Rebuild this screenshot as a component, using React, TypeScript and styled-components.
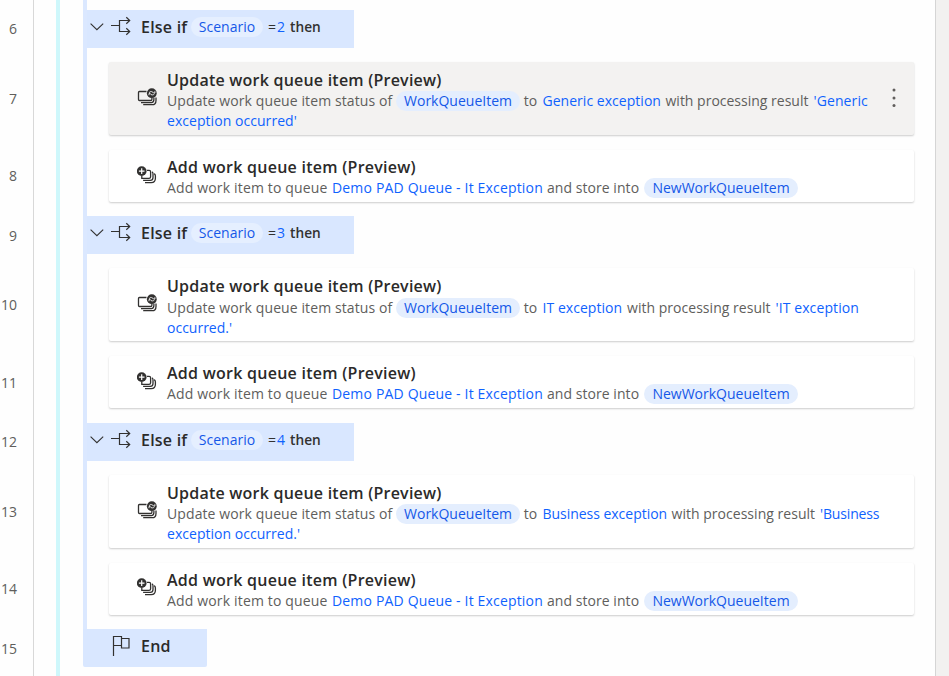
import React from 'react';
import styled, { createGlobalStyle } from 'styled-components';

const GlobalStyle = createGlobalStyle`
  * { box-sizing: border-box; }
  body { margin: 0; overflow: hidden; background: #fff; }
`;

const Designer = styled.div`
  display: flex;
  width: 949px;
  height: 676px;
  overflow: hidden;
  background: #fefefe;
  font: 14px/20px "Open Sans", "Segoe UI", sans-serif;
  color: #605e5c;
`;

const Gutter = styled.div`
  width: 34px;
  padding-top: 10.4px;
  border-right: 1px solid #d8d8d8;
`;

const LineNumber = styled.div<{ $height: number; $gap: number }>`
  display: flex;
  align-items: center;
  justify-content: flex-end;
  height: ${p => p.$height}px;
  margin-bottom: ${p => p.$gap}px;
  padding-right: 16px;
`;

const OuterRail = styled.div`
  width: 4px;
  margin-left: 22px;
  background: #cef7fb;
`;

const Steps = styled.div`
  width: 832px;
  margin-left: 23px;
`;

const Block = styled.div<{ $lead?: boolean }>`
  height: ${p => (p.$lead ? 10 : 206.25)}px;
  border-left: 4px solid #dbe8ff;
`;

const BranchHeader = styled.div`
  display: flex;
  align-items: center;
  width: 267px;
  height: 38px;
  padding: 0 0 4px 2px;
  background: #d9e7ff;
`;

const EndHeader = styled.div`
  display: flex;
  align-items: center;
  width: 124px;
  height: 38px;
  padding: 0 0 3px 28px;
  border-radius: 0 0 2px 2px;
  background: #d9e7ff;
`;

const Keyword = styled.span<{ $width?: number; $spacing?: number }>`
  flex: none;
  width: ${p => (p.$width ? `${p.$width}px` : 'auto')};
  font-size: 16px;
  font-weight: 600;
  letter-spacing: ${p => p.$spacing ?? 0.22}px;
  white-space: pre;
  color: #2b2a29;
`;

const Chip = styled.span<{ $width: number; $soft?: boolean }>`
  flex: none;
  width: ${p => p.$width}px;
  height: 20px;
  border-radius: 10px;
  line-height: 20px;
  text-align: center;
  white-space: pre;
  color: #1558e8;
  background: ${p => (p.$soft ? '#e5efff' : '#e4eefe')};
`;

const Condition = styled.span`
  display: flex;
  margin-left: 5px;
  color: #323130;
`;

const Then = styled.span`
  margin-left: 5px;
  font-weight: 600;
  font-size: 13.7px;
`;

const Value = styled.span`
  margin-left: 1px;
  color: #0f62fe;
`;

const Card = styled.div<{ $tall?: boolean; $selected?: boolean }>`
  display: flex;
  width: 805px;
  height: ${p => (p.$tall ? 73 : 52)}px;
  margin: ${p => (p.$tall ? 14 : 15)}px 0 0 22px;
  padding-top: ${p => (p.$tall ? 8 : 7)}px;
  border-radius: 2px;
  background: ${p => (p.$selected ? '#f3f2f1' : '#fff')};
  box-shadow: 0 1px 2px rgba(0, 0, 0, 0.2);
`;

const IconSlot = styled.div<{ $top: number }>`
  width: 58px;
  padding: ${p => p.$top}px 0 0 28px;
`;

const Body = styled.div`
  width: 717px;
`;

const Title = styled.div<{ $tall?: boolean }>`
  height: ${p => (p.$tall ? 21.4 : 21)}px;
  line-height: 20px;
`;

const Line = styled.div`
  display: flex;
  height: 20px;
  line-height: 20px;
`;

const Run = styled.span<{ $width: number; $spacing?: number; $link?: boolean }>`
  flex: none;
  width: ${p => p.$width}px;
  letter-spacing: ${p => p.$spacing ?? 0}px;
  white-space: pre;
  color: ${p => (p.$link ? '#0f62fe' : '#605e5c')};
`;

const MoreButton = styled.button`
  display: flex;
  width: 20px;
  height: 20px;
  margin-top: 18px;
  padding: 0;
  border: 0;
  background: none;
`;

const ScrollGutter = styled.div`
  width: 14px;
  margin-left: 20px;
  border-left: 1px solid #d5d5d5;
  background: #f2f1f0;
`;

const Drawing = styled.svg<{ $right?: number }>`
  display: block;
  flex: none;
  margin-right: ${p => p.$right ?? 0}px;
`;

const Chevron = () => (
  <Drawing width="16" height="16" $right={6} viewBox="0 0 16 16" fill="none" stroke="#323130" strokeWidth="1.1">
    <path d="M1.6 4.7 L7.9 10.7 L14.2 4.7" />
  </Drawing>
);

const Branch = () => (
  <Drawing width="22" height="22" $right={8} viewBox="0 0 22 22" fill="none" stroke="#323130" strokeWidth="1.2">
    <path d="M0 9.5H8.5M18.5 4.5H8.5V15.5H18.5M15.3 1.3L18.7 4.5L15.3 7.7M15.3 12.3L18.7 15.5L15.3 18.7" />
  </Drawing>
);

const Flag = () => (
  <Drawing width="20" height="22" $right={10} viewBox="0 0 20 22" fill="none" stroke="#323130" strokeWidth="1.2">
    <path d="M2.5 21V1.5H10.5V10.5H2.5M10.5 3.5H18V13H10.5V10.5" />
  </Drawing>
);

const UpdateIcon = () => (
  <Drawing width="21" height="20" viewBox="0 0 21 20" fill="none" stroke="#323130" strokeWidth="1.3">
    <path d="M9.5 3.5H2.4Q1.5 3.5 1.5 4.5V11.5Q1.5 12.5 2.5 12.5H13.5Q14.9 12.5 14.9 11.2V9.8" />
    <path d="M4 14.6H14.3Q16.9 14.6 16.9 11.6V9.8M6.2 16.7H15Q19 16.7 19 12.4V9.5" />
    <circle cx="14.8" cy="5.2" r="4.9" fill="#323130" stroke="none" />
    <path d="M11.9 4.9Q13 3.1 14.7 3.6Q16 4 16.5 5H17.9V3.2M12 7.2V5.6H13.3Q13.8 7 15.4 6.9Q16.8 6.8 17.5 5.8" stroke="#fff" strokeWidth="0.85" />
  </Drawing>
);

const AddIcon = () => (
  <Drawing width="21" height="20" viewBox="0 0 21 20" fill="none" stroke="#323130" strokeWidth="1.3">
    <path d="M10 4.4H12.2Q13.6 4.4 13.6 5.8V10.7Q13.6 12.3 12 12.3H4.8V10" />
    <path d="M14.9 5.8Q16 6.2 16 7.8V11.5Q16 14.4 13.2 14.4H6.1M17.2 7.6Q18.4 8.3 18.4 10V12.2Q18.4 16.6 14.2 16.6H8" />
    <circle cx="4.7" cy="5.1" r="4.9" fill="#323130" stroke="none" />
    <path d="M4.7 2.3V7.9M1.9 5.1H7.5" stroke="#fff" strokeWidth="1.2" />
  </Drawing>
);

type Part = { text: string; width: number; spacing?: number };
type Branching = {
  value: string;
  status: Part;
  resultWidth: number;
  resultSpacing?: number;
  result: Part;
  rest: Part;
  selected?: boolean;
};

const branches: Branching[] = [
  {
    value: '2',
    status: { text: 'Generic exception', width: 123, spacing: 0.03 },
    resultWidth: 148,
    result: { text: "'Generic", width: 56, spacing: 0.1 },
    rest: { text: "exception occurred'", width: 140, spacing: 0.05 },
    selected: true,
  },
  {
    value: '3',
    status: { text: 'IT exception', width: 84.5, spacing: 0.05 },
    resultWidth: 148.5,
    resultSpacing: 0.03,
    result: { text: "'IT exception", width: 85, spacing: 0.1 },
    rest: { text: "occurred.'", width: 140 },
  },
  {
    value: '4',
    status: { text: 'Business exception', width: 129, spacing: -0.03 },
    resultWidth: 148.5,
    resultSpacing: 0.03,
    result: { text: "'Business", width: 62, spacing: -0.15 },
    rest: { text: "exception occurred.'", width: 140, spacing: 0.03 },
  },
];

const UpdateCard = ({ branch }: { branch: Branching }) => (
  <Card $tall $selected={branch.selected}>
    <IconSlot $top={18}><UpdateIcon /></IconSlot>
    <Body>
      <Title $tall><Keyword>Update work queue item (Preview)</Keyword></Title>
      <Line>
        <Run $width={229} $spacing={0.1}>Update work queue item status of</Run>
        <Chip $width={124}>WorkQueueItem</Chip>
        <Run $width={22.5} $spacing={0.1}> to</Run>
        <Run $link $width={branch.status.width} $spacing={branch.status.spacing}>{branch.status.text}</Run>
        <Run $width={branch.resultWidth} $spacing={branch.resultSpacing}>with processing result</Run>
        <Run $link $width={branch.result.width} $spacing={branch.result.spacing}>{branch.result.text}</Run>
      </Line>
      <Line>
        <Run $link $width={branch.rest.width} $spacing={branch.rest.spacing}>{branch.rest.text}</Run>
      </Line>
    </Body>
    {branch.selected && (
      <MoreButton aria-label="More actions">
        <Drawing width="20" height="20" viewBox="0 0 20 20" fill="#605e5c">
          <circle cx="10" cy="2" r="1.5" />
          <circle cx="10" cy="10" r="1.5" />
          <circle cx="10" cy="17.5" r="1.5" />
        </Drawing>
      </MoreButton>
    )}
  </Card>
);

const AddCard = () => (
  <Card>
    <IconSlot $top={8.5}><AddIcon /></IconSlot>
    <Body>
      <Title><Keyword $spacing={0.26}>Add work queue item (Preview)</Keyword></Title>
      <Line>
        <Run $width={165} $spacing={0.16}>Add work item to queue</Run>
        <Run $link $width={215} $spacing={0.17}>Demo PAD Queue - It Exception</Run>
        <Run $width={97} $spacing={0.05}>and store into</Run>
        <Chip $width={154}>NewWorkQueueItem</Chip>
      </Line>
    </Body>
  </Card>
);

const firstLine = 6;

export default function App() {
  return (
    <>
      <GlobalStyle />
      <Designer>
        <Gutter>
          {branches.map((b, i) => (
            <React.Fragment key={b.value}>
              <LineNumber $height={38} $gap={13.5}>{firstLine + i * 3}</LineNumber>
              <LineNumber $height={74} $gap={14}>{firstLine + i * 3 + 1}</LineNumber>
              <LineNumber $height={53} $gap={13.85}>{firstLine + i * 3 + 2}</LineNumber>
            </React.Fragment>
          ))}
          <LineNumber $height={39} $gap={0}>{firstLine + branches.length * 3}</LineNumber>
        </Gutter>
        <OuterRail />
        <Steps>
          <Block $lead />
          {branches.map(b => (
            <Block key={b.value}>
              <BranchHeader>
                <Chevron />
                <Branch />
                <Keyword $width={50}>Else if</Keyword>
                <Chip $soft $width={72}>Scenario</Chip>
                <Condition>=<Value>{b.value}</Value><Then>then</Then></Condition>
              </BranchHeader>
              <UpdateCard branch={b} />
              <AddCard />
            </Block>
          ))}
          <EndHeader>
            <Flag />
            <Keyword>End</Keyword>
          </EndHeader>
        </Steps>
        <ScrollGutter />
      </Designer>
    </>
  );
}
